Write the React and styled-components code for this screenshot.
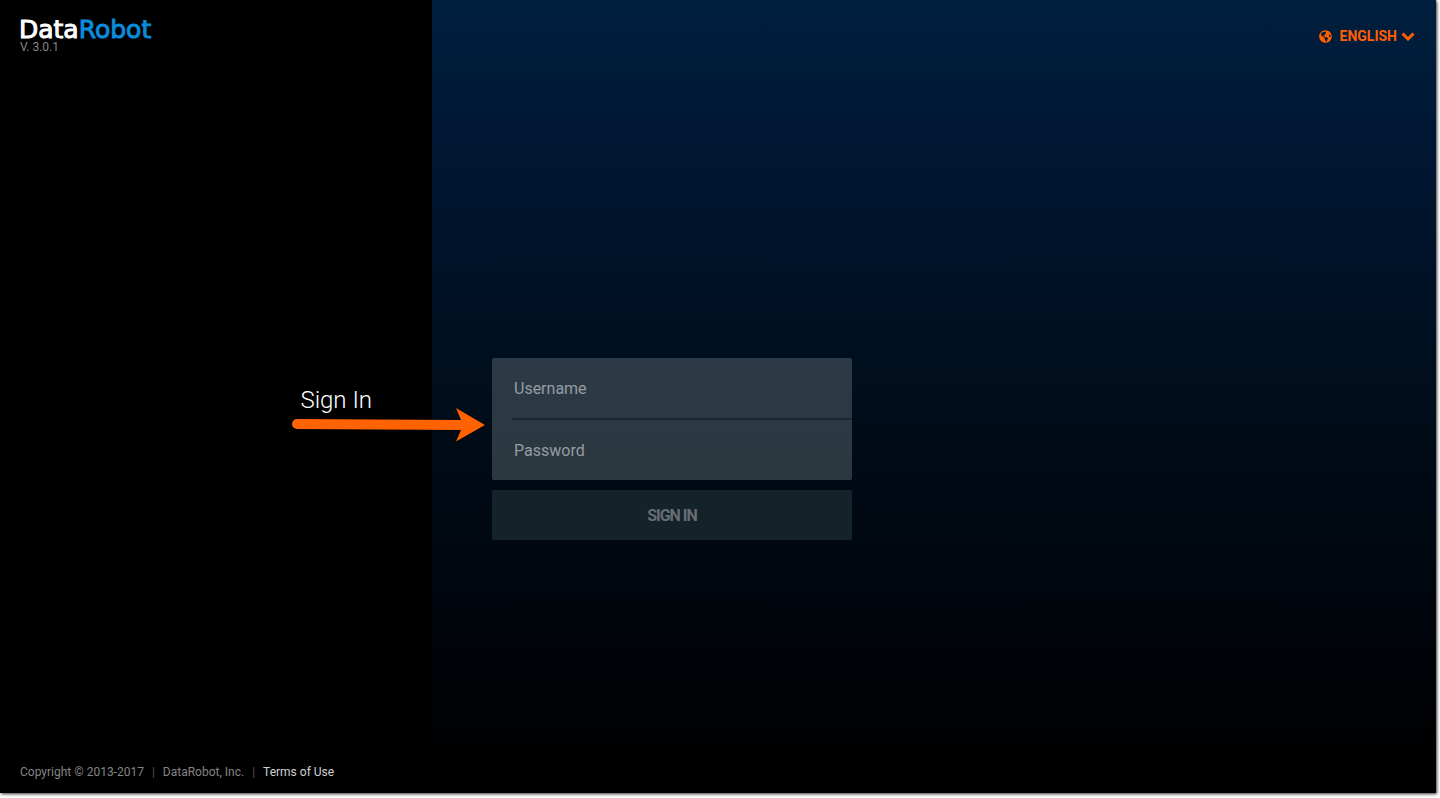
import React, { useState } from "react";
import styled, { createGlobalStyle } from "styled-components";
import { FaGlobeAmericas } from "react-icons/fa";

const GlobalStyle = createGlobalStyle`
  *, *::before, *::after { box-sizing: border-box; }
  body {
    margin: 0;
    background: #fff;
    font-family: Roboto, "Liberation Sans", sans-serif;
  }
`;

const Frame = styled.div`
  display: grid;
  grid-template-columns: 30vw 1fr;
  min-height: calc(100vh - 5px);
  margin: 0 4px 5px 0;
  box-shadow: 1px 1px 3px rgba(0, 0, 0, 0.8);
`;

const Column = styled.div`
  display: grid;
  grid-template-rows: calc(45vh - 1px) 1fr auto;
`;

const Sidebar = styled(Column)`
  background: #000;
`;

const Main = styled(Column)`
  background: linear-gradient(
    #001f3e 0%,
    #001b38 10%,
    #001835 15%,
    #00142c 28%,
    #001022 42%,
    #000b16 57%,
    #00060e 74%,
    #000 97%
  );
`;

const Brand = styled.header`
  padding: 18px 19px;
`;

const Logo = styled.div`
  font: 400 25px/24px "DejaVu Sans", sans-serif;
  -webkit-text-stroke: 1px currentColor;
  color: #fff;
`;

const LogoAccent = styled.span`
  color: #0b8bdb;
`;

const Version = styled.div`
  padding-left: 1px;
  font-size: 12px;
  line-height: 10px;
  color: #858585;
`;

const Title = styled.h1`
  margin: 0;
  padding: 28px 60px 0 0;
  text-align: right;
  font-size: 24px;
  line-height: 28px;
  font-weight: 300;
  color: #fff;
`;

const Footer = styled.footer`
  display: flex;
  gap: 8px;
  padding: 0 20px 13px;
  font-size: 12px;
  line-height: 16px;
  white-space: nowrap;
  color: #858585;
`;

const Divider = styled.span`
  color: #555;
`;

const FooterLink = styled.a`
  color: #d0d0d0;
  text-decoration: none;
`;

const TopBar = styled.div`
  display: flex;
  justify-content: flex-end;
  padding: 26px 21px 0;
`;

const Language = styled.label`
  display: flex;
  align-items: center;
  height: 20px;
  color: #ff5f00;
`;

const LanguageSelect = styled.select`
  appearance: none;
  field-sizing: content;
  margin: 0 4px 0 8px;
  padding: 0;
  border: 0;
  background: transparent;
  color: inherit;
  font: 700 14px/20px Roboto, sans-serif;
  text-transform: uppercase;
`;

const Form = styled.form`
  position: relative;
  width: 360px;
  margin-left: 60px;
`;

const Fields = styled.div`
  border-radius: 2px;
  overflow: hidden;
  background: linear-gradient(#2c3a47, #2c3840 80%, #28383f);
`;

const FieldRow = styled.div`
  display: grid;
  align-items: center;
  height: ${(p) => (p.$divided ? 62 : 60)}px;
  margin-left: 20px;
  border-bottom: ${(p) => (p.$divided ? "2px solid #1b2830" : "0")};
  font-size: 16px;
  line-height: 20px;
`;

const FieldInput = styled.input`
  grid-area: 1 / 1;
  width: 100%;
  height: 60px;
  padding: 0 2px;
  border: 0;
  outline: 0;
  background: transparent;
  color: #fff;
  font: inherit;
`;

const FieldLabel = styled.label`
  grid-area: 1 / 1;
  padding: 2px 0 0 2px;
  color: #969ca2;
  pointer-events: none;

  ${FieldInput}:not(:placeholder-shown) + & {
    visibility: hidden;
  }
`;

const SubmitButton = styled.button`
  display: block;
  width: 100%;
  height: 50px;
  margin-top: 10px;
  padding: 2px 0 0;
  border: 0;
  border-radius: 2px;
  background: #14222a;
  color: #666e74;
  font: 700 16px/20px Roboto, sans-serif;
  letter-spacing: -1px;
  text-transform: uppercase;
`;

const Arrow = styled.svg`
  position: absolute;
  top: 46px;
  left: -204px;
  pointer-events: none;
  filter: drop-shadow(0 1px 1px rgba(0, 0, 0, 0.6));
`;

function Field({ id, type, label, divided }) {
  return (
    <FieldRow $divided={divided}>
      <FieldInput id={id} type={type} placeholder=" " />
      <FieldLabel htmlFor={id}>{label}</FieldLabel>
    </FieldRow>
  );
}

function PointerArrow() {
  return (
    <Arrow width="200" height="42" viewBox="0 0 200 42" aria-hidden="true">
      <path
        d="M9 15 L173 16 L168 4 L197 21 L168 37.500 L173 26 L9 25 A5 5 0 0 1 9 15 Z"
        fill="#ff6200"
      />
    </Arrow>
  );
}

function Chevron() {
  return (
    <svg width="14" height="10" viewBox="0 0 14 10" aria-hidden="true">
      <path d="M1.500 2.500 L7 8 L12.500 2.500" fill="none" stroke="currentColor" strokeWidth="3" />
    </svg>
  );
}

export default function App() {
  const [language, setLanguage] = useState("en");
  return (
    <>
      <GlobalStyle />
      <Frame>
        <Sidebar>
          <Brand>
            <Logo>
              Data<LogoAccent>Robot</LogoAccent>
            </Logo>
            <Version>V. 3.0.1</Version>
          </Brand>
          <Title>Sign In</Title>
          <Footer>
            <span>Copyright © 2013-2017</span>
            <Divider>|</Divider>
            <span>DataRobot, Inc.</span>
            <Divider>|</Divider>
            <FooterLink href="#terms">Terms of Use</FooterLink>
          </Footer>
        </Sidebar>
        <Main as="main">
          <TopBar>
            <Language>
              <FaGlobeAmericas size={13} aria-hidden="true" />
              <LanguageSelect
                aria-label="Language"
                value={language}
                onChange={(e) => setLanguage(e.target.value)}
              >
                <option value="en">English</option>
              </LanguageSelect>
              <Chevron />
            </Language>
          </TopBar>
          <Form onSubmit={(e) => e.preventDefault()}>
            <Fields>
              <Field id="username" type="text" label="Username" divided />
              <Field id="password" type="password" label="Password" />
            </Fields>
            <SubmitButton type="submit">Sign in</SubmitButton>
            <PointerArrow />
          </Form>
        </Main>
      </Frame>
    </>
  );
}
